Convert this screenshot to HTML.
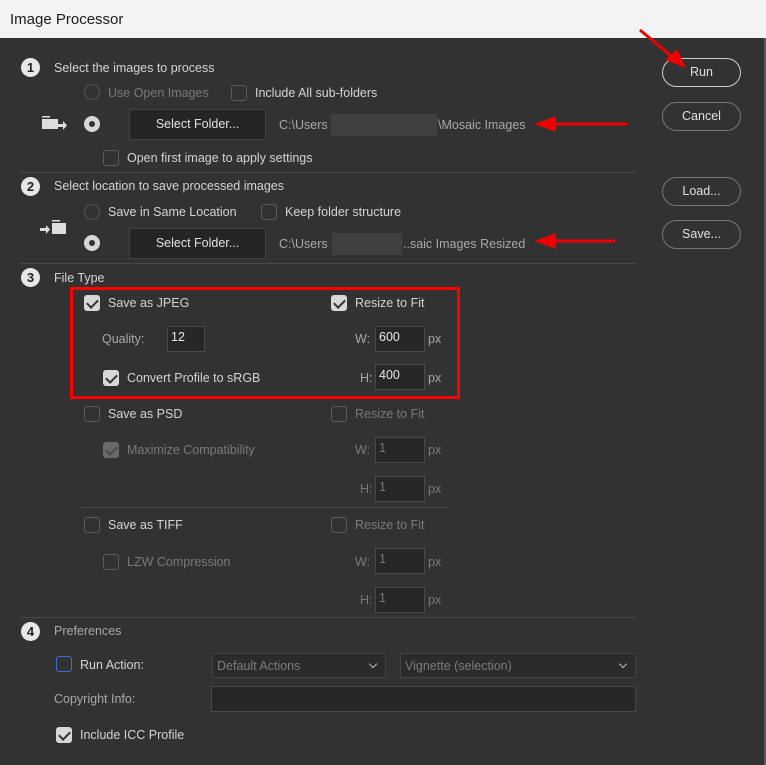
<!DOCTYPE html>
<html><head><meta charset="utf-8"><style>
*{box-sizing:border-box;margin:0;padding:0}
body{width:766px;height:765px;background:#2b2b2b;font-family:"Liberation Sans",sans-serif;font-size:12.5px;color:#d4d4d4;position:relative;overflow:hidden}
.win{position:absolute;left:0;top:0;width:766px;height:765px;background:#323232;border-right:2px solid #5a5a5a}
.title{position:absolute;left:0;top:0;width:766px;height:38px;background:#f3f3f3;color:#1b1b1b;font-size:15px;padding:11px 0 0 10px}
.a{position:absolute;white-space:nowrap;line-height:14px}
.t{color:#d4d4d4}.d{color:#7a7a7a}.l{color:#a8a8a8}
.num{position:absolute;width:19px;height:19px;border-radius:50%;background:#e8e8e8;color:#222;font-weight:bold;font-size:13px;text-align:center;line-height:19px}
.cb{position:absolute;width:16px;height:16px;border:1px solid #5c5c5c;border-radius:3px}
.cb.on{background:#d8d8d8;border-color:#d8d8d8}
.cb.on::after{content:"";position:absolute;left:4px;top:1px;width:5px;height:9px;border:solid #333;border-width:0 2px 2px 0;transform:rotate(45deg)}
.cb.dis{background:#6a6a6a;border-color:#6a6a6a}
.cb.dis::after{content:"";position:absolute;left:4px;top:1px;width:5px;height:9px;border:solid #4a4a4a;border-width:0 2px 2px 0;transform:rotate(45deg)}
.rd{position:absolute;width:16px;height:16px;border-radius:50%;border:1px solid #555}
.rd.on{background:#d8d8d8;border-color:#d8d8d8}
.rd.on::after{content:"";position:absolute;left:4px;top:4px;width:6px;height:6px;border-radius:50%;background:#333}
.btn{position:absolute;background:#252525;border:1px solid #444;color:#e0e0e0;text-align:center;border-radius:2px}
.inp{position:absolute;background:#272727;border:1px solid #494949;padding:3px 0 0 3px;color:#e8e8e8}
.inp.dim{color:#777}
.ln{position:absolute;height:1px;background:#4a4a4a}
.pill{position:absolute;width:79px;height:29px;border:1px solid #777;border-radius:15px;text-align:center;line-height:27px;color:#e0e0e0}
.dd{position:absolute;background:#2b2b2b;border:1px solid #444;color:#7c7c7c;padding:5px 0 0 4px;height:25px}
.dd::after{content:"";position:absolute;right:9px;top:7px;width:5px;height:5px;border:solid #bbb;border-width:0 1px 1px 0;transform:rotate(45deg)}
.gray{position:absolute;background:#404040}
</style></head><body>
<div class="win"></div>
<div class="title">Image Processor</div>

<div class="num" style="left:21px;top:58px">1</div>
<div class="a t" style="left:54px;top:61px">Select the images to process</div>
<div class="rd" style="left:84px;top:84px;border-color:#555"></div>
<div class="a d" style="left:108px;top:86px">Use Open Images</div>
<div class="cb" style="left:231px;top:85px"></div>
<div class="a t" style="left:255px;top:86px">Include All sub-folders</div>
<svg style="position:absolute;left:40px;top:114px" width="30" height="22"><rect x="2" y="2" width="8" height="1.5" fill="#ddd"/><rect x="2" y="5" width="16" height="10" fill="#ddd"/><path d="M17 10h6v-3l4 4.5-4 4.5v-3h-6z" fill="#ddd"/></svg>
<div class="rd on" style="left:84px;top:116px"></div>
<div class="btn" style="left:129px;top:109px;width:137px;height:31px;line-height:29px">Select Folder...</div>
<div class="a l" style="left:279px;top:118px">C:\Users</div>
<div class="gray" style="left:331px;top:114px;width:106px;height:22px"></div>
<div class="a l" style="left:438px;top:118px">\Mosaic Images</div>
<div class="cb" style="left:103px;top:150px"></div>
<div class="a t" style="left:127px;top:151px">Open first image to apply settings</div>
<div class="ln" style="left:20px;top:172px;width:616px"></div>

<div class="num" style="left:21px;top:177px">2</div>
<div class="a t" style="left:54px;top:179px">Select location to save processed images</div>
<div class="rd" style="left:84px;top:204px"></div>
<div class="a t" style="left:108px;top:205px">Save in Same Location</div>
<div class="cb" style="left:261px;top:204px"></div>
<div class="a t" style="left:285px;top:205px">Keep folder structure</div>
<svg style="position:absolute;left:38px;top:218px" width="30" height="22"><rect x="14" y="2" width="8" height="1.5" fill="#ddd"/><rect x="14" y="5" width="14" height="11" fill="#ddd"/><path d="M2 10h6v-3l4 4.5-4 4.5v-3h-6z" fill="#ddd"/></svg>
<div class="rd on" style="left:84px;top:235px"></div>
<div class="btn" style="left:129px;top:228px;width:137px;height:31px;line-height:29px">Select Folder...</div>
<div class="a l" style="left:279px;top:237px">C:\Users</div>
<div class="gray" style="left:332px;top:233px;width:70px;height:22px"></div>
<div class="a l" style="left:403px;top:237px">..saic Images Resized</div>
<div class="ln" style="left:20px;top:263px;width:616px"></div>

<div class="num" style="left:21px;top:268px">3</div>
<div class="a t" style="left:54px;top:271px">File Type</div>
<div style="position:absolute;left:70px;top:287px;width:390px;height:112px;border:3px solid #f00"></div>
<div class="cb on" style="left:84px;top:295px"></div>
<div class="a t" style="left:108px;top:296px">Save as JPEG</div>
<div class="cb on" style="left:331px;top:295px"></div>
<div class="a t" style="left:355px;top:296px">Resize to Fit</div>
<div class="a l" style="left:102px;top:332px">Quality:</div>
<div class="inp" style="left:167px;top:326px;width:38px;height:26px">12</div>
<div class="a l" style="left:355px;top:332px">W:</div>
<div class="inp" style="left:375px;top:326px;width:50px;height:26px">600</div>
<div class="a l" style="left:428px;top:332px">px</div>
<div class="cb on" style="left:103px;top:370px"></div>
<div class="a t" style="left:127px;top:371px">Convert Profile to sRGB</div>
<div class="a l" style="left:360px;top:371px">H:</div>
<div class="inp" style="left:375px;top:364px;width:50px;height:26px">400</div>
<div class="a l" style="left:428px;top:371px">px</div>

<div class="cb" style="left:84px;top:406px"></div>
<div class="a t" style="left:108px;top:407px">Save as PSD</div>
<div class="cb" style="left:331px;top:406px"></div>
<div class="a d" style="left:355px;top:407px">Resize to Fit</div>
<div class="cb dis" style="left:103px;top:442px"></div>
<div class="a d" style="left:127px;top:443px">Maximize Compatibility</div>
<div class="a d" style="left:355px;top:443px">W:</div>
<div class="inp dim" style="left:375px;top:437px;width:50px;height:26px">1</div>
<div class="a d" style="left:428px;top:443px">px</div>
<div class="a d" style="left:360px;top:482px">H:</div>
<div class="inp dim" style="left:375px;top:476px;width:50px;height:26px">1</div>
<div class="a d" style="left:428px;top:482px">px</div>
<div class="ln" style="left:82px;top:507px;width:368px"></div>

<div class="cb" style="left:84px;top:517px"></div>
<div class="a t" style="left:108px;top:518px">Save as TIFF</div>
<div class="cb" style="left:331px;top:517px"></div>
<div class="a d" style="left:355px;top:518px">Resize to Fit</div>
<div class="cb" style="left:103px;top:554px"></div>
<div class="a d" style="left:127px;top:555px">LZW Compression</div>
<div class="a d" style="left:355px;top:555px">W:</div>
<div class="inp dim" style="left:375px;top:548px;width:50px;height:26px">1</div>
<div class="a d" style="left:428px;top:555px">px</div>
<div class="a d" style="left:360px;top:593px">H:</div>
<div class="inp dim" style="left:375px;top:587px;width:50px;height:26px">1</div>
<div class="a d" style="left:428px;top:593px">px</div>
<div class="ln" style="left:20px;top:617px;width:616px"></div>

<div class="num" style="left:21px;top:622px">4</div>
<div class="a l" style="left:54px;top:624px">Preferences</div>
<div class="cb" style="left:56px;top:656px;border-color:#3a6fd0"></div>
<div class="a t" style="left:80px;top:658px">Run Action:</div>
<div class="dd" style="left:212px;top:653px;width:174px">Default Actions</div>
<div class="dd" style="left:400px;top:653px;width:236px">Vignette (selection)</div>
<div class="a l" style="left:54px;top:692px">Copyright Info:</div>
<div class="inp" style="left:211px;top:686px;width:425px;height:26px"></div>
<div class="cb on" style="left:56px;top:727px"></div>
<div class="a t" style="left:80px;top:728px">Include ICC Profile</div>

<div class="pill" style="left:662px;top:58px;border-color:#cfcfcf">Run</div>
<div class="pill" style="left:662px;top:102px">Cancel</div>
<div class="pill" style="left:662px;top:177px">Load...</div>
<div class="pill" style="left:662px;top:220px">Save...</div>

<svg style="position:absolute;left:0;top:0" width="766" height="765">
<g stroke="#e00" stroke-width="3" fill="#e00">
<line x1="640" y1="30" x2="676" y2="60"/><polygon points="686,68 665,60 677,49" stroke="none"/>
<line x1="627" y1="124" x2="548" y2="124"/><polygon points="534,124 556,116 556,132" stroke="none"/>
<line x1="615" y1="241" x2="548" y2="241"/><polygon points="534,241 556,233 556,249" stroke="none"/>
</g></svg>
</body></html>
